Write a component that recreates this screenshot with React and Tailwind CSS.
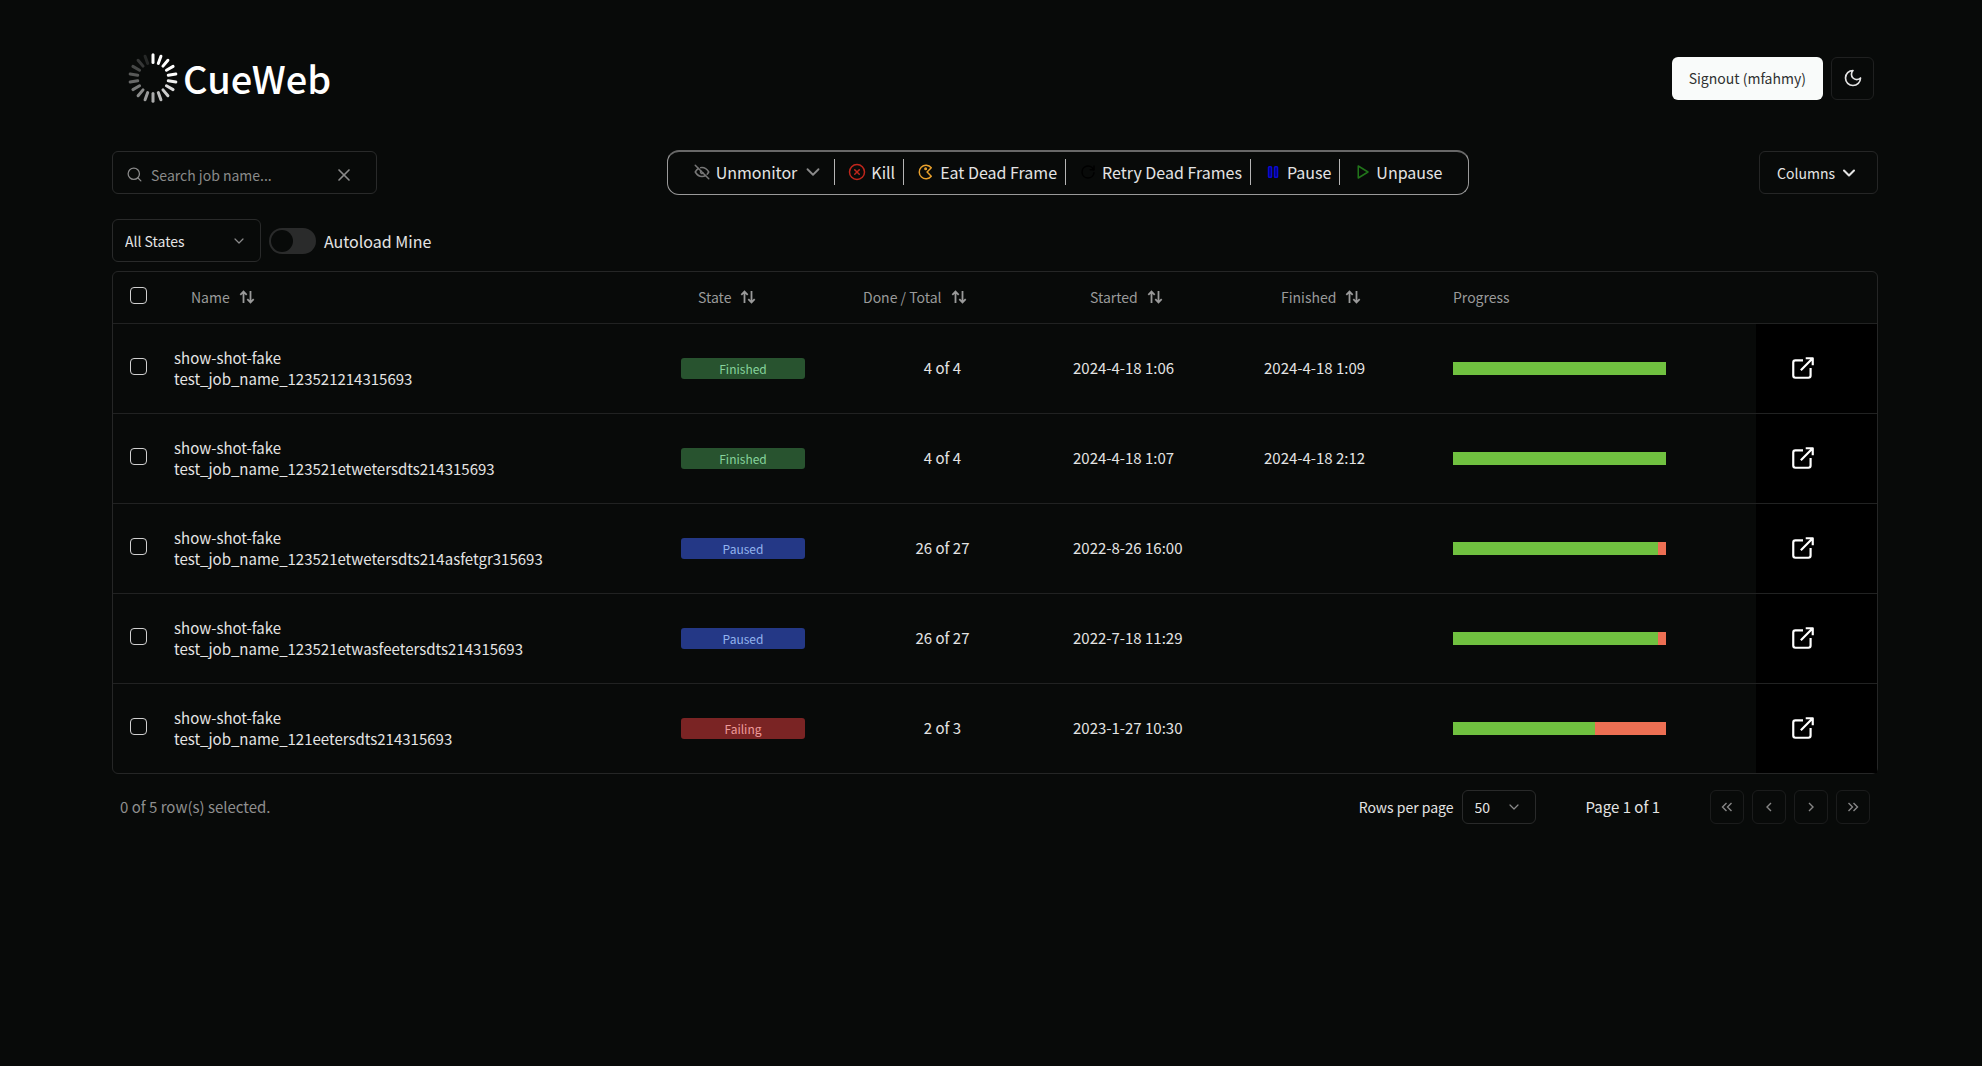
import { ChevronDown, X, Search, CircleX } from "lucide-react";
import { TbEyeOff, TbPacman, TbReload, TbPlayerPause, TbPlayerPlay } from "react-icons/tb";

const jobs = [
  { name: "test_job_name_123521214315693", state: "Finished", done: 4, total: 4, started: "2024-4-18 1:06", finished: "2024-4-18 1:09" },
  { name: "test_job_name_123521etwetersdts214315693", state: "Finished", done: 4, total: 4, started: "2024-4-18 1:07", finished: "2024-4-18 2:12" },
  { name: "test_job_name_123521etwetersdts214asfetgr315693", state: "Paused", done: 26, total: 27, started: "2022-8-26 16:00", finished: "" },
  { name: "test_job_name_123521etwasfeetersdts214315693", state: "Paused", done: 26, total: 27, started: "2022-7-18 11:29", finished: "" },
  { name: "test_job_name_121eetersdts214315693", state: "Failing", done: 2, total: 3, started: "2023-1-27 10:30", finished: "" },
];

const badgeStyles = {
  Finished: "bg-[#28532f] text-[#86d39c]",
  Paused: "bg-[#243886] text-[#93b4ee]",
  Failing: "bg-[#7a2424] text-[#ee9c9c]",
};

const spokes = Array.from({ length: 18 }, (_, i) => i);

function Logo() {
  return (
    <svg viewBox="0 0 50 50" className="size-[50px]" aria-hidden="true">
      {spokes.map((i) => (
        <line
          key={i}
          x1="25"
          y1="1.8"
          x2="25"
          y2="9.5"
          stroke="#ffffff"
          strokeWidth="3"
          strokeLinecap="round"
          opacity={i < 5 ? 1 : Math.max(0.12, 1 - (i - 4) * 0.068)}
          transform={`rotate(${i * 20} 25 25)`}
        />
      ))}
    </svg>
  );
}

function SortIcon() {
  return (
    <svg viewBox="0 0 16 16" className="size-4" fill="none" stroke="currentColor" strokeWidth="1.8" aria-hidden="true">
      <path d="M4.5 14V2.5M1.3 5.8l3.2-3.2 3.2 3.2M11.5 2v11.5M8.3 10.2l3.2 3.2 3.2-3.2" />
    </svg>
  );
}

function Moon() {
  return (
    <svg viewBox="0 0 24 24" className="size-5" fill="none" stroke="currentColor" strokeWidth="2" strokeLinecap="round" strokeLinejoin="round" aria-hidden="true">
      <path d="M12 3a6 6 0 0 0 9 9 9 9 0 1 1-9-9Z" />
    </svg>
  );
}

function OpenIcon() {
  return (
    <svg viewBox="0 0 24 24" className="size-[26px]" fill="none" stroke="currentColor" strokeWidth="2" strokeLinejoin="round" aria-hidden="true">
      <path d="M12 5H5a2 2 0 0 0-2 2v12a2 2 0 0 0 2 2h12a2 2 0 0 0 2-2v-7" />
      <path d="M10 14 20.5 3.5M14.5 3H21v6.5" />
    </svg>
  );
}

function Paging({ direction, double }) {
  const left = direction === "left";
  return (
    <svg viewBox="0 0 16 16" className="size-4" fill="none" stroke="currentColor" strokeWidth="1.4" aria-hidden="true">
      {double ? (
        <path d={left ? "M7.5 4 3.5 8l4 4M12.5 4l-4 4 4 4" : "M8.5 4l4 4-4 4M3.5 4l4 4-4 4"} />
      ) : (
        <path d={left ? "M10 4 6 8l4 4" : "M6 4l4 4-4 4"} />
      )}
    </svg>
  );
}

function Select({ id, label, children, className }) {
  return (
    <div className={`grid items-center ${className}`}>
      <select id={id} aria-label={label} className="col-start-1 row-start-1 h-full w-full appearance-none rounded-md border border-[#292a2a] bg-transparent px-3 text-sm text-[#e4e4e4]">
        {children}
      </select>
      <ChevronDown className="pointer-events-none col-start-1 row-start-1 mr-[14px] size-4 justify-self-end text-[#8a8a8a]" strokeWidth={1.8} />
    </div>
  );
}

function Action({ icon, children, last }) {
  return (
    <button type="button" className={`flex h-[26px] items-center gap-[5px] pl-[13px] text-base ${last ? "" : "border-r border-[#b5b5b5] pr-2"}`}>
      {icon}
      {children}
    </button>
  );
}

function Heading({ children, sortable = true }) {
  return (
    <th scope="col" className="px-[17px] text-left font-normal">
      {sortable ? (
        <button type="button" className="flex items-center gap-[9px] pl-[17px] whitespace-nowrap">
          {children}
          <SortIcon />
        </button>
      ) : (
        children
      )}
    </th>
  );
}

function Check({ label }) {
  return <input type="checkbox" aria-label={label} className="mb-1 block size-[17px] appearance-none rounded-[4px] border border-[#d0d0d0] checked:bg-white" />;
}

export default function App() {
  return (
    <div className="min-h-screen bg-[#080a09] pr-[104px] pl-28 font-['Noto_Sans_CJK_SC',sans-serif] text-[#e4e4e4]">
      <header className="flex h-[150px] items-center justify-between pr-1 pl-4">
        <div className="flex items-center gap-[5px] pt-[6px]">
          <Logo />
          <h1 className="text-[38px] leading-[50px] font-medium text-white">CueWeb</h1>
        </div>
        <div className="flex items-center gap-2 pt-[6px]">
          <button type="button" className="h-[43px] rounded-md bg-[#f9fbfa] px-[17px] text-sm text-[#303131]">Signout (mfahmy)</button>
          <button type="button" aria-label="Toggle theme" className="flex size-[43px] items-center justify-center rounded-md border border-[#1f2020]">
            <Moon />
          </button>
        </div>
      </header>

      <div className="flex items-center justify-between">
        <div className="flex h-[43px] w-[265px] items-center gap-2 rounded-md border border-[#292a2a] pt-1 pr-[22px] pl-[13px] text-[#8a8a8a]">
          <Search className="size-[17px] shrink-0" strokeWidth={1.8} />
          <input type="text" aria-label="Search job name" placeholder="Search job name..." className="min-w-0 flex-1 bg-transparent text-sm outline-none placeholder:text-[#8a8a8a]" />
          <button type="button" aria-label="Clear search"><X className="size-5" strokeWidth={2} /></button>
        </div>

        <div role="toolbar" aria-label="Job actions" className="flex h-[45px] items-center rounded-xl border border-t-2 border-[#9a9a9a] border-t-[#686868] pr-[26px] pb-[2px] pl-[13px]">
          <button type="button" className="flex h-[26px] items-center gap-[5px] border-r border-[#b5b5b5] pr-[10px] pl-3 text-base">
            <TbEyeOff className="size-[18px] text-[#777777]" />
            Unmonitor
            <ChevronDown className="size-[22px] text-[#8a8a8a]" strokeWidth={2} />
          </button>
          <Action icon={<CircleX className="size-[18px] text-[#c0261c]" />}>Kill</Action>
          <Action icon={<TbPacman className="size-[18px] text-[#e8a02c]" />}>Eat Dead Frame</Action>
          <Action icon={<TbReload className="size-[18px] text-black" />}>Retry Dead Frames</Action>
          <Action icon={<TbPlayerPause className="size-[18px] fill-[#000080] text-[#0b0bd0]" />}>Pause</Action>
          <Action last icon={<TbPlayerPlay className="size-[18px] text-[#21751a]" />}>Unpause</Action>
        </div>

        <button type="button" className="flex h-[43px] items-center gap-1 rounded-md border border-[#252626] pr-[18px] pl-[17px] text-sm">
          Columns
          <ChevronDown className="size-5" strokeWidth={2.5} />
        </button>
      </div>

      <div className="mt-[24px] flex items-center">
        <Select id="state" label="Job state" className="h-[43px] w-[149px]">
          <option>All States</option>
        </Select>
        <label className="ml-2 flex items-center gap-2 text-base">
          <input type="checkbox" role="switch" className="flex h-[26px] w-[47px] appearance-none items-center rounded-full bg-[#2a2b2b] px-[2px] before:size-[22px] before:rounded-full before:bg-[#080a09] checked:justify-end" />
          Autoload Mine
        </label>
      </div>

      <div className="mt-[9px] rounded-md border border-[#252626]">
        <table className="w-full table-fixed border-collapse text-[15px]">
          <colgroup>
            <col className="w-11" />
            <col />
            <col className="w-[165px]" />
            <col className="w-[227px]" />
            <col className="w-[191px]" />
            <col className="w-[189px]" />
            <col className="w-[320px]" />
            <col className="w-[121px]" />
          </colgroup>
          <thead>
            <tr className="h-[51px] border-b border-[#212222] text-sm text-[#9a9a9a]">
              <th scope="col" className="pl-[17px]"><Check label="Select all" /></th>
              <Heading>Name</Heading>
              <Heading>State</Heading>
              <Heading>Done / Total</Heading>
              <Heading>Started</Heading>
              <Heading>Finished</Heading>
              <Heading sortable={false}>Progress</Heading>
              <td />
            </tr>
          </thead>
          <tbody>
            {jobs.map((job) => (
              <tr key={job.name} className="h-[90px] border-b border-[#212222] last:border-b-0">
                <td className="pl-[17px]"><Check label={`Select ${job.name}`} /></td>
                <td className="px-[17px] leading-[21px]">
                  show-shot-fake
                  <br />
                  {job.name}
                </td>
                <td className="px-[17px] pr-6">
                  <div className={`rounded-[3px] text-center text-xs/[21px] ${badgeStyles[job.state]}`}>{job.state}</div>
                </td>
                <td className="text-center">{job.done} of {job.total}</td>
                <td className="px-[17px]">{job.started}</td>
                <td className="px-[17px]">{job.finished}</td>
                <td className="px-[17px]">
                  <div className="flex h-[13px] w-[213px] bg-[#ec6f53]">
                    <div className="bg-[#70c140]" style={{ width: `${(job.done / job.total) * 100}%` }} />
                  </div>
                </td>
                <td className="bg-black pl-[34px] text-white">
                  <a href="#job" aria-label={`Open ${job.name}`} className="inline-block align-middle"><OpenIcon /></a>
                </td>
              </tr>
            ))}
          </tbody>
        </table>
      </div>

      <footer className="mt-4 flex items-center pr-2 pl-2 text-[15px]">
        <p className="flex-1 text-[#8f8f8f]">0 of 5 row(s) selected.</p>
        <label htmlFor="rows" className="mr-2 text-sm">Rows per page</label>
        <Select id="rows" label="Rows per page" className="h-[34px] w-[74px]">
          <option>50</option>
        </Select>
        <p className="mx-[50px]">Page 1 of 1</p>
        <div className="flex gap-2 text-[#868686]">
          <button type="button" aria-label="First page" className="flex size-[34px] items-center justify-center rounded-md border border-[#1b1c1c]"><Paging direction="left" double /></button>
          <button type="button" aria-label="Previous page" className="flex size-[34px] items-center justify-center rounded-md border border-[#1b1c1c]"><Paging direction="left" /></button>
          <button type="button" aria-label="Next page" className="flex size-[34px] items-center justify-center rounded-md border border-[#1b1c1c]"><Paging direction="right" /></button>
          <button type="button" aria-label="Last page" className="flex size-[34px] items-center justify-center rounded-md border border-[#1b1c1c]"><Paging direction="right" double /></button>
        </div>
      </footer>
    </div>
  );
}
